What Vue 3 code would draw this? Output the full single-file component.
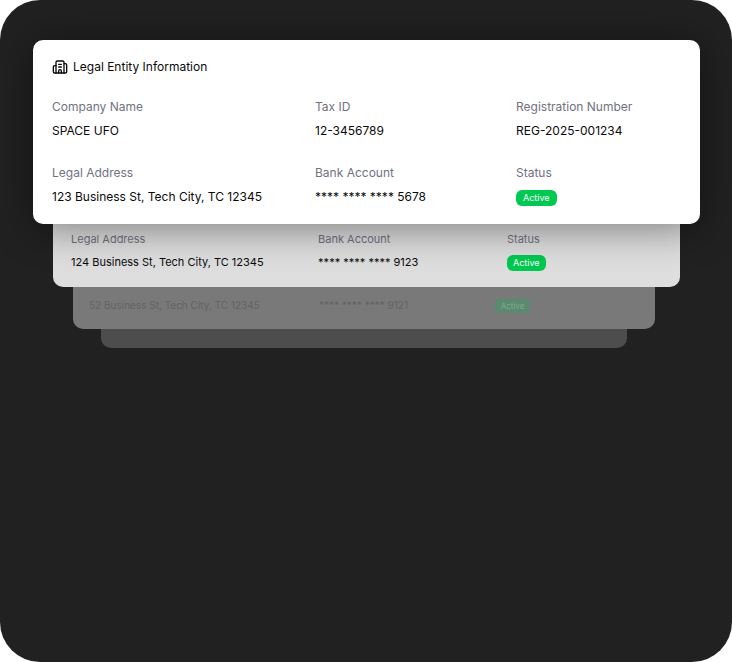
<script setup>
const cards = [
  {
    level: 'front',
    title: 'Legal Entity Information',
    fields: [
      { label: 'Company Name', value: 'SPACE UFO' },
      { label: 'Tax ID', value: '12-3456789' },
      { label: 'Registration Number', value: 'REG-2025-001234' },
      { label: 'Legal Address', value: '123 Business St, Tech City, TC 12345' },
      { label: 'Bank Account', value: '**** **** **** 5678' },
      { label: 'Status', value: 'Active', badge: true },
    ],
  },
  {
    level: 'second',
    fields: [
      { label: 'Legal Address', value: '124 Business St, Tech City, TC 12345' },
      { label: 'Bank Account', value: '**** **** **** 9123' },
      { label: 'Status', value: 'Active', badge: true },
    ],
  },
  {
    level: 'third',
    fields: [
      { value: '52 Business St, Tech City, TC 12345' },
      { value: '**** **** **** 9121' },
      { value: 'Active', badge: true },
    ],
  },
  { level: 'last', fields: [] },
]
</script>

<template>
  <main class="panel">
    <section v-for="card in cards" :key="card.level" class="card" :class="card.level">
      <h2 v-if="card.title" class="title">
        <svg class="icon" viewBox="0 0 24 24" aria-hidden="true">
          <path d="M10 12h4" />
          <path d="M10 8h4" />
          <path d="M14 21v-3a2 2 0 0 0-4 0v3" />
          <path d="M6 10H4a2 2 0 0 0-2 2v7a2 2 0 0 0 2 2h16a2 2 0 0 0 2-2V9a2 2 0 0 0-2-2h-2" />
          <path d="M6 21V5a2 2 0 0 1 2-2h8a2 2 0 0 1 2 2v16" />
        </svg>
        <span>{{ card.title }}</span>
      </h2>
      <dl v-if="card.fields.length" class="fields">
        <div v-for="field in card.fields" :key="field.value" class="field">
          <dt v-if="field.label">{{ field.label }}</dt>
          <dd>
            <span v-if="field.badge" class="badge">{{ field.value }}</span>
            <template v-else>{{ field.value }}</template>
          </dd>
        </div>
      </dl>
    </section>
  </main>
</template>

<style>
body {
  background: #ffffff;
}
</style>

<style scoped>
.panel {
  box-sizing: border-box;
  min-height: 100vh;
  padding: 40px 32px 40px 33px;
  border-radius: 40px;
  background: #212121;
  font-family: Inter, 'Liberation Sans', sans-serif;
  color: #0a0a0a;
}

.card {
  position: relative;
  box-sizing: border-box;
  border-radius: 0 0 10px 10px;
}

.front {
  z-index: 2;
  padding: 17px 19px;
  border-radius: 10px;
  background: #ffffff;
  box-shadow: 0 4px 40px rgba(0, 0, 0, 0.45);
  font-size: 12px;
}

.second {
  margin: 0 20px;
  padding: 5px 18px 15px;
  background: #dedede;
  font-size: 11px;
}

.third {
  margin: 0 45px 0 40px;
  padding: 8px 16px 14px;
  background: #797979;
  font-size: 10px;
}

.last {
  height: 19px;
  margin: 0 73px 0 68px;
  background: #4d4d4d;
}

.title {
  display: flex;
  align-items: center;
  gap: 5px;
  margin: 0 0 20px;
  font-size: 12px;
  font-weight: 400;
  line-height: 20px;
}

.icon {
  width: 16px;
  height: 16px;
  fill: none;
  stroke: currentColor;
  stroke-width: 2;
  stroke-linecap: round;
  stroke-linejoin: round;
}

.fields {
  display: grid;
  grid-template-columns: 263fr 201fr 165fr;
  row-gap: 22px;
  margin: 0;
}

.field {
  display: flex;
  flex-direction: column;
  gap: 4px;
  min-width: 0;
  white-space: nowrap;
}

dt {
  color: #71717f;
  line-height: 20px;
}

dd {
  display: flex;
  align-items: center;
  height: 20px;
  margin: 0;
  line-height: 20px;
}

.second .field {
  gap: 3px;
}

.third .field {
  color: #636363;
}

.badge {
  margin-top: 2px;
  padding: 0 7px;
  border-radius: 6px;
  background: #00c951;
  color: #ffffff;
  font-size: 9px;
  font-weight: 400;
  line-height: 16px;
}

.second .badge,
.third .badge {
  padding: 0 6px;
}

.third .badge {
  border-radius: 5px;
  background: #5b8b6e;
  color: #84a892;
  font-size: 8px;
  line-height: 14px;
}
</style>
